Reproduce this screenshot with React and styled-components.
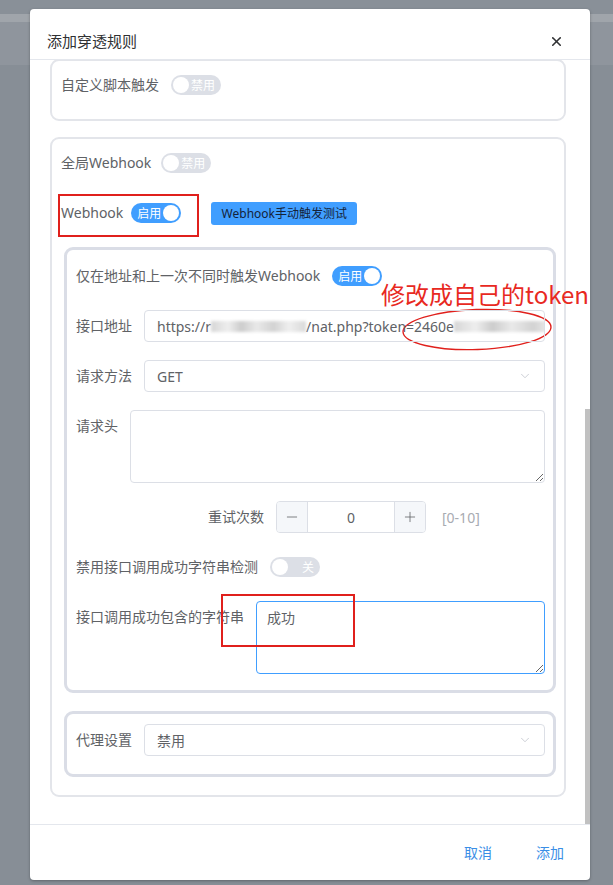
import React from "react";
import styled, { createGlobalStyle } from "styled-components";
import { X, ChevronDown, Minus, Plus } from "lucide-react";

const Global = createGlobalStyle`
  html, body { margin: 0; padding: 0; }
  body {
    width: 613px;
    height: 885px;
    overflow: hidden;
    font-family: "Noto Sans", "Noto Sans CJK SC", sans-serif;
    background: linear-gradient(
      180deg,
      #899098 0px, #899098 14px,
      #a0a5ab 14px, #a0a5ab 22px,
      #8f959d 22px, #8f959d 65px,
      #878e96 65px
    );
  }
`;

const Page = styled.div`
  padding: 9px 0 0 30px;
`;

const Dialog = styled.div`
  width: 560px;
  height: 871px;
  background: #fff;
  border-radius: 4px;
  box-shadow: 0 1px 3px rgba(0, 0, 0, 0.3);
  display: flex;
  flex-direction: column;
  overflow: hidden;
`;

const Header = styled.div`
  display: flex;
  align-items: center;
  justify-content: space-between;
  padding: 20px 26px 6px 17px;
  height: 24px;
  border-bottom: 1px solid #e4e7ed;
  flex-shrink: 0;
`;

const Title = styled.span`
  font-size: 15px;
  line-height: 24px;
  color: #303133;
  font-family: "Noto Sans CJK SC", sans-serif;
`;

const Body = styled.div`
  position: relative;
  flex: 1;
  overflow: hidden;
  padding: 0 24px 0 20px;
`;

const ScrollThumb = styled.div`
  position: absolute;
  right: 0;
  top: 349px;
  width: 5px;
  height: 420px;
  background: #c1c1c1;
`;

const Footer = styled.div`
  height: 53px;
  border-top: 1px solid #e4e7ed;
  display: flex;
  align-items: center;
  justify-content: flex-end;
  gap: 44px;
  padding: 0 26px 2px 0;
  flex-shrink: 0;
`;

const TextButton = styled.span`
  font-size: 14px;
  color: #3a8ee6;
  font-family: "Noto Sans CJK SC", sans-serif;
`;

const Card = styled.div`
  border: 2px solid #e3e5ea;
  border-radius: 9px;
  padding: 8px 8px 0 9px;
  margin-top: ${(p) => (p.$first ? -1 : 0)}px;
  margin-bottom: 16px;
`;

const InnerCard = styled.div`
  position: relative;
  border: 3px solid #dadde6;
  border-radius: 9px;
  margin: 0 0 18px 3px;
  padding: 10px 8px 0 9px;
`;

const Item = styled.div`
  position: relative;
  display: flex;
  align-items: ${(p) => (p.$top ? "flex-start" : "center")};
  margin-bottom: ${(p) => (p.$mb != null ? p.$mb : 18)}px;
  min-height: 32px;
`;

const Label = styled.span`
  flex-shrink: 0;
  width: ${(p) => (p.$w ? `${p.$w}px` : "auto")};
  box-sizing: border-box;
  text-align: ${(p) => (p.$right ? "right" : "left")};
  padding-right: ${(p) => (p.$pr != null ? p.$pr : 12)}px;
  font-size: 14px;
  line-height: 32px;
  color: #606266;
  white-space: nowrap;
  font-family: "Noto Sans", "Noto Sans CJK SC", sans-serif;
`;

const SwitchTrack = styled.span`
  display: inline-flex;
  flex-direction: ${(p) => (p.$on ? "row" : "row-reverse")};
  align-items: center;
  justify-content: space-between;
  width: 50px;
  height: 20px;
  box-sizing: border-box;
  padding-left: ${(p) => (p.$on ? 6 : 2)}px;
  padding-right: ${(p) => (p.$on ? 2 : 6)}px;
  border-radius: 10px;
  background: ${(p) => (p.$on ? "#409eff" : "#dcdfe6")};
  flex-shrink: 0;
`;

const SwitchText = styled.span`
  font-size: 12px;
  line-height: 20px;
  color: #fff;
  font-family: "Noto Sans CJK SC", sans-serif;
`;

const Knob = styled.span`
  width: 16px;
  height: 16px;
  border-radius: 50%;
  background: #fff;
`;

const Switch = ({ on, text }) => (
  <SwitchTrack $on={on}>
    <SwitchText>{text}</SwitchText>
    <Knob />
  </SwitchTrack>
);

const PrimaryButton = styled.span`
  margin-left: 30px;
  display: inline-flex;
  align-items: center;
  justify-content: center;
  width: 146px;
  height: 23px;
  border-radius: 3px;
  background: #409eff;
  color: #14233a;
  font-size: 12px;
  font-family: "Noto Sans", "Noto Sans CJK SC", sans-serif;
`;

const Input = styled.div`
  flex: 1;
  min-width: 0;
  height: 32px;
  box-sizing: border-box;
  border: 1px solid #dcdfe6;
  border-radius: 4px;
  padding: 0 12px;
  display: flex;
  align-items: center;
  justify-content: space-between;
  overflow: hidden;
  white-space: nowrap;
  font-size: 14px;
  color: #606266;
  font-family: "Noto Sans", "Noto Sans CJK SC", sans-serif;
`;

const Blur = styled.span`
  display: inline-block;
  flex-shrink: 0;
  width: ${(p) => p.$w}px;
  height: 11px;
  background: linear-gradient(
    90deg,
    #d6d6d6 0%, #eeeeee 18%, #cccccc 32%, #e9e9e9 48%, #d2d2d2 66%, #efefef 82%, #d9d9d9 100%
  );
  filter: blur(1.4px);
`;

const UrlLine = styled.span`
  display: inline-flex;
  align-items: center;
`;

const TextArea = styled.textarea`
  flex: 1;
  height: ${(p) => p.$h}px;
  box-sizing: border-box;
  border: 1px solid ${(p) => (p.$focus ? "#409eff" : "#dcdfe6")};
  border-radius: 4px;
  padding: 5px 10px;
  font-size: 14px;
  line-height: 21px;
  color: #606266;
  resize: vertical;
  outline: none;
  font-family: "Noto Sans CJK SC", sans-serif;
`;

const NumberBox = styled.div`
  display: flex;
  width: 150px;
  height: 32px;
  box-sizing: border-box;
  border: 1px solid #dcdfe6;
  border-radius: 4px;
  overflow: hidden;
`;

const StepButton = styled.span`
  width: 30px;
  display: flex;
  align-items: center;
  justify-content: center;
  background: #f5f7fa;
  color: #606266;
  border-${(p) => (p.$side === "left" ? "right" : "left")}: 1px solid #dcdfe6;
`;

const NumberValue = styled.span`
  flex: 1;
  display: flex;
  align-items: center;
  justify-content: center;
  font-size: 14px;
  color: #606266;
  font-family: "Noto Sans", sans-serif;
`;

const RangeHint = styled.span`
  margin-left: 16px;
  font-size: 14px;
  color: #a8abb2;
  font-family: "Noto Sans", sans-serif;
`;

const RedBox = styled.div`
  position: absolute;
  left: ${(p) => p.$l}px;
  top: ${(p) => p.$t}px;
  width: ${(p) => p.$w}px;
  height: ${(p) => p.$h}px;
  box-sizing: border-box;
  border: 2px solid #e0201c;
  pointer-events: none;
`;

const RedNote = styled.span`
  position: absolute;
  left: 314px;
  top: 30px;
  font-size: 24px;
  line-height: 28px;
  color: #e8291f;
  white-space: nowrap;
  font-family: "Noto Sans CJK SC", sans-serif;
`;

const Ellipse = styled.svg`
  position: absolute;
  left: 334px;
  top: 58px;
  overflow: visible;
  pointer-events: none;
`;

export default function App() {
  return (
    <>
      <Global />
      <Page>
        <Dialog>
          <Header>
            <Title>添加穿透规则</Title>
            <X size={15} strokeWidth={2.6} color="#303133" />
          </Header>
          <Body>
            <Card $first>
              <Item>
                <Label>自定义脚本触发</Label>
                <Switch on={false} text="禁用" />
              </Item>
            </Card>
            <Card>
              <Item>
                <Label $pr={10}>全局Webhook</Label>
                <Switch on={false} text="禁用" />
              </Item>
              <Item>
                <Label $pr={8}>Webhook</Label>
                <Switch on text="启用" />
                <PrimaryButton>Webhook手动触发测试</PrimaryButton>
                <RedBox $l={-3} $t={-3} $w={141} $h={43} />
              </Item>
              <InnerCard>
                <RedNote>修改成自己的token</RedNote>
                <Ellipse width="152" height="43" viewBox="0 0 152 43">
                  <ellipse
                    cx="76"
                    cy="21.5"
                    rx="74"
                    ry="20"
                    fill="none"
                    stroke="#e0201c"
                    strokeWidth="1.4"
                    transform="rotate(-2 76 21.5)"
                  />
                </Ellipse>
                <Item>
                  <Label>仅在地址和上一次不同时触发Webhook</Label>
                  <Switch on text="启用" />
                </Item>
                <Item>
                  <Label>接口地址</Label>
                  <Input>
                    <UrlLine>
                      https://r
                      <Blur $w={95} />
                      /nat.php?token=2460e
                      <Blur $w={120} />
                    </UrlLine>
                  </Input>
                </Item>
                <Item>
                  <Label>请求方法</Label>
                  <Input>
                    <span>GET</span>
                    <ChevronDown size={14} strokeWidth={1.4} color="#c0c4cc" />
                  </Input>
                </Item>
                <Item $top>
                  <Label>请求头</Label>
                  <TextArea $h={73} readOnly defaultValue="" />
                </Item>
                <Item>
                  <Label $w={200} $right>
                    重试次数
                  </Label>
                  <NumberBox>
                    <StepButton $side="left">
                      <Minus size={16} strokeWidth={1.2} />
                    </StepButton>
                    <NumberValue>0</NumberValue>
                    <StepButton $side="right">
                      <Plus size={16} strokeWidth={1.2} />
                    </StepButton>
                  </NumberBox>
                  <RangeHint>[0-10]</RangeHint>
                </Item>
                <Item>
                  <Label>禁用接口调用成功字符串检测</Label>
                  <Switch on={false} text="关" />
                </Item>
                <Item $top $mb={16}>
                  <Label>接口调用成功包含的字符串</Label>
                  <TextArea $h={73} $focus readOnly defaultValue="成功" />
                  <RedBox $l={145} $t={-7} $w={134} $h={53} />
                </Item>
              </InnerCard>
              <InnerCard>
                <Item>
                  <Label>代理设置</Label>
                  <Input>
                    <span>禁用</span>
                    <ChevronDown size={14} strokeWidth={1.4} color="#c0c4cc" />
                  </Input>
                </Item>
              </InnerCard>
            </Card>
            <ScrollThumb />
          </Body>
          <Footer>
            <TextButton>取消</TextButton>
            <TextButton>添加</TextButton>
          </Footer>
        </Dialog>
      </Page>
    </>
  );
}
